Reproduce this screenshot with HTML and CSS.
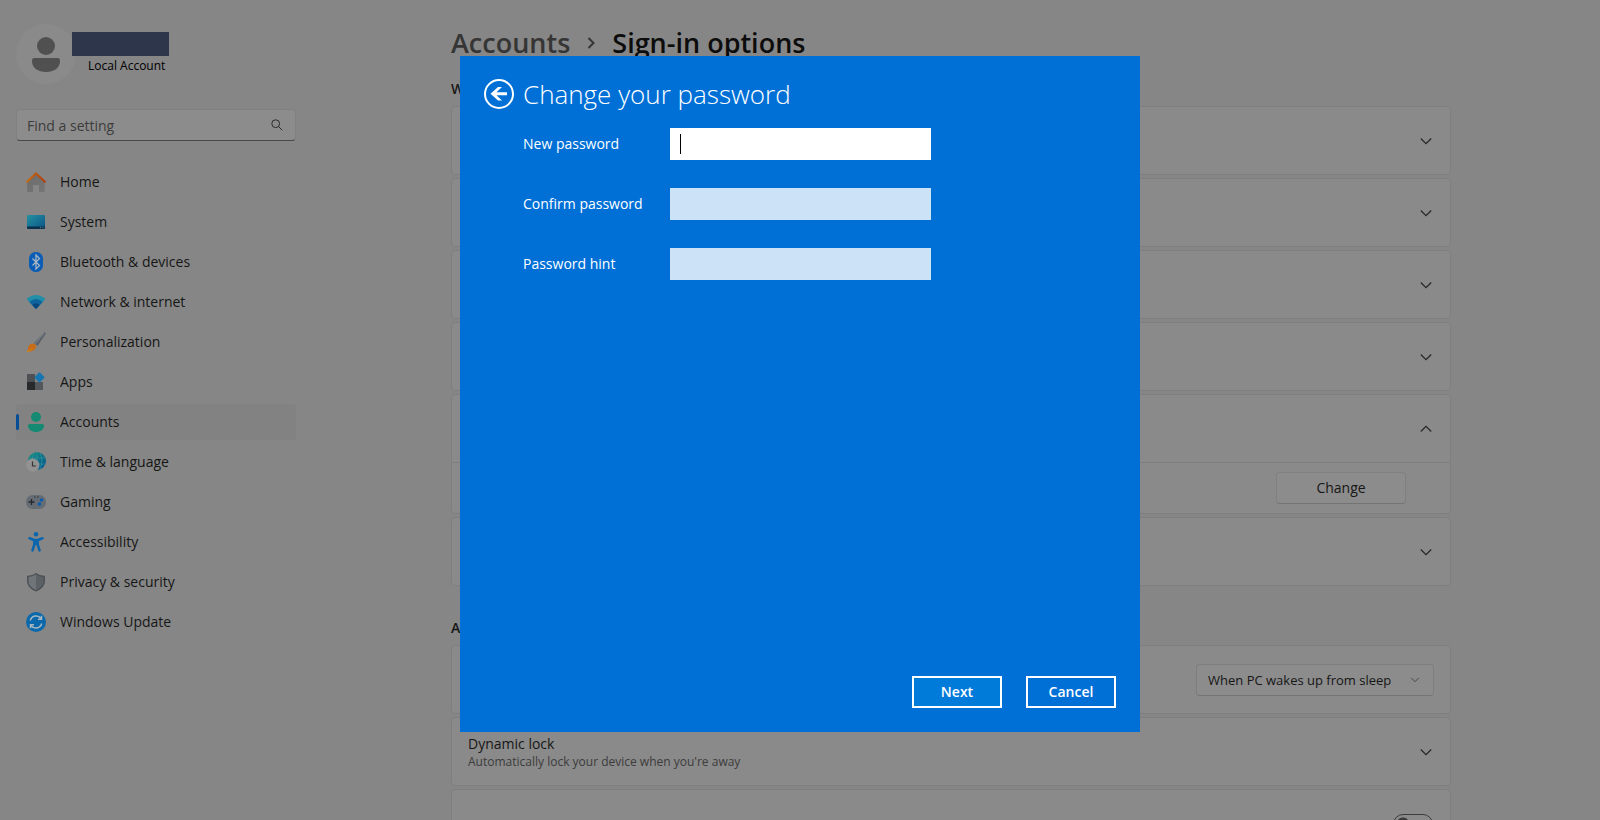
FILE: index.html
```html
<!DOCTYPE html>
<html lang="en">
<head>
<meta charset="utf-8">
<title>Settings</title>
<link rel="stylesheet" href="styles.css">
</head>
<body>
<div class="app">
  <aside class="sidebar">
    <div class="profile">
      <svg class="avatar" viewBox="0 0 60 60" aria-hidden="true"><circle cx="30" cy="30" r="30" fill="#8a8a8a"/><circle cx="30" cy="22" r="9" fill="#505050"/><path d="M18 34h24q2 0 2 3c0 7-6 11-14 11s-14-4-14-11q0-3 2-3z" fill="#505050"/></svg>
      <div class="who">
        <div class="name-mask"></div>
        <div class="account-type">Local Account</div>
      </div>
    </div>
    <form class="search">
      <input class="search-input" type="text" placeholder="Find a setting" aria-label="Find a setting">
      <svg class="search-icon" viewBox="0 0 12 12" aria-hidden="true"><circle cx="4.7" cy="4.7" r="3.9"/><path d="M7.6 7.6L11.3 11.3"/></svg>
    </form>
    <nav class="nav">
      <a class="nav-item" href="#"><svg class="ico" viewBox="0 0 20 20" aria-hidden="true"><defs><linearGradient id="roof" x1="0" x2="1"><stop offset="0" stop-color="#c46a10"/><stop offset="1" stop-color="#b0400e"/></linearGradient><linearGradient id="wall" x2="1" y2="1"><stop offset="0" stop-color="#6c6c6c"/><stop offset="1" stop-color="#767676"/></linearGradient></defs><path d="M1.200 10L10 2l8.800 8v9a1 1 0 0 1-1 1H13v-7H7v7H2.200a1 1 0 0 1-1-1z" fill="url(#wall)"/><path d="M1.200 9.800L10 1.500l8.800 8.300" fill="none" stroke="url(#roof)" stroke-width="2.200" stroke-linecap="round" stroke-linejoin="round"/></svg>Home</a>
      <a class="nav-item" href="#"><svg class="ico" viewBox="0 0 20 20" aria-hidden="true"><defs><linearGradient id="scr" x2="1" y2="1"><stop offset="0" stop-color="#2492a0"/><stop offset="1" stop-color="#0b5288"/></linearGradient></defs><rect x="1" y="3" width="18" height="14" rx="1" fill="url(#scr)"/><path d="M1 14.500h18V16q0 1-1 1H2q-1 0-1-1z" fill="#08304c"/><path d="M14 15.700h1M16.500 15.700h1" stroke="#6d8796"/></svg>System</a>
      <a class="nav-item" href="#"><svg class="ico" viewBox="0 0 20 20" aria-hidden="true"><rect x="3" y="0" width="14" height="20" rx="6.500" fill="#0a5cb4"/><path d="M6.500 6.500l7 7L10 17V3l3.500 3.500-7 7" fill="none" stroke="#a9b6c4" stroke-width="1.300"/></svg>Bluetooth &amp; devices</a>
      <a class="nav-item" href="#"><svg class="ico" viewBox="0 0 20 20" aria-hidden="true"><path d="M.5 7Q10-1 19.500 7L10 17z" fill="#228ea8"/><path d="M3.300 10Q10 4 16.700 10L10 17z" fill="#0e659e"/><path d="M6.200 13Q10 9.500 13.800 13L10 17z" fill="#08467c"/></svg>Network &amp; internet</a>
      <a class="nav-item" href="#"><svg class="ico" viewBox="0 0 20 20" aria-hidden="true"><path d="M19 .4q1 .5.500 1.600L11.500 14 8 11 17.500 1q.8-.8 1.500-.6z" fill="#5c6169"/><path d="M17.800 1.200L9.500 11.500" stroke="#858b93"/><path d="M4 12.500c2-2 5-.8 6 1 .6 4-3 6.500-9.500 6 1.500-1 1.500-1.800 1.700-4 .2-1.500.8-2.200 1.800-3z" fill="#c96c18"/><path d="M1 19.500q4-.5 5.500-3" stroke="#d78a22" fill="none"/></svg>Personalization</a>
      <a class="nav-item" href="#"><svg class="ico" viewBox="0 0 20 20" aria-hidden="true"><path d="M1 2h8v8H1z" fill="#4d5054"/><path d="M1 10h8v8H1z" fill="#28292b"/><path d="M9 10h8v8H9z" fill="#54575b"/><rect x="9.700" y="1.600" width="7.600" height="7.600" rx="1" fill="#1775b2" transform="rotate(45 13.500 5.400)"/></svg>Apps</a>
      <a class="nav-item active" href="#" aria-current="page"><svg class="ico" viewBox="0 0 20 20" aria-hidden="true"><circle cx="10" cy="5" r="5" fill="#148a72"/><path d="M3.500 12h13q1.500 0 1.500 1.500c0 4-3.500 6.500-8 6.500s-8-2.500-8-6.500Q2 12 3.500 12z" fill="#148a72"/></svg>Accounts</a>
      <a class="nav-item" href="#"><svg class="ico" viewBox="0 0 20 20" aria-hidden="true"><defs><linearGradient id="globe" x2="1" y2="1"><stop offset="0" stop-color="#17907f"/><stop offset="1" stop-color="#07558f"/></linearGradient></defs><circle cx="11" cy="9" r="9" fill="url(#globe)"/><path d="M3 6h16M3 12h16M11 0v18M8 1q-4 8 0 16M14 1q4 8 0 16" fill="none" stroke="#3b97a2" stroke-width=".6"/><circle cx="6.800" cy="13.200" r="6.600" fill="#929292"/><path d="M6.500 9.500V14H10" fill="none" stroke="#333" stroke-width="1.200"/></svg>Time &amp; language</a>
      <a class="nav-item" href="#"><svg class="ico" viewBox="0 0 20 20" aria-hidden="true"><rect x="0" y="3" width="20" height="14" rx="6.500" fill="#666c74"/><path d="M5.500 7v6M2.500 10h6" stroke="#26282b" stroke-width="1.300"/><path d="M8 5h1.500M11 5h1.500" stroke="#333"/><circle cx="15.500" cy="8" r="1.800" fill="#0b5cae"/><circle cx="13.500" cy="12" r="1.800" fill="#0b5cae"/></svg>Gaming</a>
      <a class="nav-item" href="#"><svg class="ico" viewBox="0 0 20 20" aria-hidden="true"><circle cx="10" cy="2.300" r="2.300" fill="#0c66ae"/><path d="M3.500 6.300L8 8h4l4.500-1.700M8.500 8v4L6.500 18.300M11.500 8v4l2 6.300" fill="none" stroke="#0c66ae" stroke-width="2.600" stroke-linecap="round" stroke-linejoin="round"/><path d="M7.500 7.500h5V13h-5z" fill="#0c66ae"/></svg>Accessibility</a>
      <a class="nav-item" href="#"><svg class="ico" viewBox="0 0 20 20" aria-hidden="true"><path d="M10 1q4 3 9 2.800V9q0 7-9 10.500Q1 16 1 9V3.800Q6 4 10 1z" fill="#4c5156"/><path d="M10 2.600q3.500 2.300 7.500 2.500V9q0 6-7.500 9z" fill="#5c6166"/><path d="M10 2.600Q6.500 4.900 2.500 5.100V9q0 6 7.500 9z" fill="#70757a"/></svg>Privacy &amp; security</a>
      <a class="nav-item" href="#"><svg class="ico" viewBox="0 0 20 20" aria-hidden="true"><circle cx="10" cy="10" r="10" fill="#0b68aa"/><path d="M4.300 8.500A6 6 0 0 1 15 6.500M15.500 3.800v3.500H12M15.700 11.500A6 6 0 0 1 5 13.500M4.500 16.200v-3.500H8" fill="none" stroke="#a4b6c3" stroke-width="1.500"/></svg>Windows Update</a>
    </nav>
  </aside>
  <main class="main">
    <div class="content">
      <h1 class="crumbs"><a class="crumb" href="#">Accounts</a><svg class="crumb-sep" viewBox="0 0 8 12" aria-hidden="true"><path d="M1.500 1l5 5-5 5"/></svg><span>Sign-in options</span></h1>
      <h2 class="section">Ways to sign in</h2>
      <div class="cards">
        <div class="card"><button class="row" aria-label="Expand"><svg class="chev" viewBox="0 0 12 12"><path d="M.8 3.500L6 8.700l5.200-5.200"/></svg></button></div>
        <div class="card"><button class="row" aria-label="Expand"><svg class="chev" viewBox="0 0 12 12"><path d="M.8 3.500L6 8.700l5.200-5.200"/></svg></button></div>
        <div class="card"><button class="row" aria-label="Expand"><svg class="chev" viewBox="0 0 12 12"><path d="M.8 3.500L6 8.700l5.200-5.200"/></svg></button></div>
        <div class="card"><button class="row" aria-label="Expand"><svg class="chev" viewBox="0 0 12 12"><path d="M.8 3.500L6 8.700l5.200-5.200"/></svg></button></div>
        <div class="card">
          <button class="row" aria-label="Collapse"><svg class="chev" viewBox="0 0 12 12"><path d="M.8 8.500L6 3.300l5.200 5.200"/></svg></button>
          <div class="subrow"><button class="btn">Change</button></div>
        </div>
        <div class="card"><button class="row" aria-label="Expand"><svg class="chev" viewBox="0 0 12 12"><path d="M.8 3.500L6 8.700l5.200-5.200"/></svg></button></div>
      </div>
      <h2 class="section section-next">Additional settings</h2>
      <div class="cards">
        <div class="card"><div class="row">
          <div class="select-wrap"><select class="select" aria-label="Require sign-in"><option>When PC wakes up from sleep</option></select><svg class="select-chev" viewBox="0 0 12 12" aria-hidden="true"><path d="M1.500 3.500L6 8l4.500-4.500"/></svg></div>
        </div></div>
        <div class="card"><button class="row"><span class="label"><span class="label-title">Dynamic lock</span><span class="label-sub">Automatically lock your device when you're away</span></span><svg class="chev" viewBox="0 0 12 12"><path d="M.8 3.500L6 8.700l5.200-5.200"/></svg></button></div>
        <div class="card"><div class="row"><label class="label-title label-single" for="restart">Automatically save my restartable apps and restart them when I sign back in</label><input class="toggle" id="restart" type="checkbox"></div></div>
      </div>
    </div>
  </main>
</div>
<div class="overlay">
  <form class="dialog" role="dialog" aria-labelledby="dlg-title">
    <header class="dlg-head">
      <button class="back" type="button" aria-label="Back"><svg viewBox="0 0 30 30" aria-hidden="true"><circle cx="15" cy="15" r="14" fill="none" stroke="#fff" stroke-width="2"/><path d="M6.500 14.800L14 8h4l-5.500 5.300H23v3H12.500L18 21.500h-4z" fill="#fff"/></svg></button>
      <h2 class="dlg-title" id="dlg-title">Change your password</h2>
    </header>
    <div class="fields">
      <label for="pw">New password</label><input class="field current" id="pw" type="password" autofocus>
      <label for="pw2">Confirm password</label><input class="field" id="pw2" type="password">
      <label for="hint">Password hint</label><input class="field" id="hint" type="text">
    </div>
    <footer class="dlg-foot"><button class="dlg-btn primary" type="button">Next</button><button class="dlg-btn" type="button">Cancel</button></footer>
  </form>
</div>
</body>
</html>
```
FILE: styles.css
```css
* { box-sizing: border-box; }
body {
  margin: 0;
  height: 100vh;
  overflow: hidden;
  background: #868686;
  color: #161616;
  font: 14px/20px "Open Sans", "Noto Sans", sans-serif;
}
button, input, select { font: inherit; color: inherit; margin: 0; }
h1, h2 { margin: 0; }
.app { display: flex; height: 100vh; overflow: hidden; }

/* Sidebar */
.sidebar { width: 302px; flex: none; padding: 24px 6px 0 16px; }
.profile { display: flex; height: 60px; }
.avatar { width: 60px; height: 60px; flex: none; }
.who { margin: 8px 0 0 -4px; }
.name-mask { width: 97px; height: 24px; background: #2d364b; }
.account-type { padding-left: 16px; font-size: 12px; color: #000; }
.search { display: flex; position: relative; margin-top: 25px; }
.search-input {
  width: 100%; height: 32px; padding: 0 36px 0 10px;
  background: #8c8c8c; border: 1px solid #808080; border-bottom-color: #484848;
  border-radius: 4px; outline: none;
}
.search-input::placeholder { color: #3c3c3c; opacity: 1; }
.search-icon { position: absolute; right: 13px; top: 10px; width: 12px; height: 12px; fill: none; stroke: #2c2c2c; }
.nav { display: flex; flex-direction: column; gap: 4px; margin-top: 23px; }
.nav-item {
  position: relative; display: flex; align-items: center; gap: 14px;
  height: 36px; padding: 0 10px; border-radius: 4px;
  color: inherit; text-decoration: none;
}
.ico { width: 20px; height: 20px; }
.active { background: #828282; }
.active::before { content: ""; position: absolute; left: 0; top: 10px; width: 3px; height: 16px; border-radius: 2px; background: #074c97; }

/* Page */
.main { flex: 1; min-width: 0; }
.content { max-width: 1000px; margin: 0 auto; padding-top: 25px; }
.crumbs { display: flex; align-items: center; font-size: 27px; line-height: 36px; font-weight: 600; color: #0c0c0c; }
.crumb { color: #353535; text-decoration: none; }
.crumb-sep { width: 8px; height: 12px; margin: 0 17px; fill: none; stroke: #353535; stroke-width: 2; }
.section { margin: 18px 0 7px; font-size: 14px; font-weight: 600; }
.section-next { margin-top: 32px; }
.cards { display: flex; flex-direction: column; gap: 3px; }
.card { background: #8a8a8a; border: 1px solid #7f7f7f; border-radius: 4px; }
.row {
  display: flex; align-items: center; justify-content: flex-end;
  width: 100%; height: 67px; padding: 0 17px 0 16px;
  background: none; border: 0; text-align: left;
}
button.row { padding-right: 18px; }
.chev { width: 12px; height: 12px; fill: none; stroke: #262626; stroke-width: 1.2; }
.subrow { display: flex; justify-content: flex-end; padding: 9px 44px 9px 16px; border-top: 1px solid #7f7f7f; }
.btn { width: 130px; height: 32px; background: #8c8c8c; border: 1px solid #808080; border-bottom-color: #747474; border-radius: 4px; }
.select-wrap { display: flex; position: relative; }
.row .select-wrap { margin-right: -1px; }
.select { appearance: none; width: 238px; height: 32px; padding: 0 11px; font-size: 13px; background: #8c8c8c; border: 1px solid #7e7e7e; border-bottom-color: #747474; border-radius: 4px; }
.select-chev { position: absolute; right: 14px; top: 11px; width: 10px; height: 10px; fill: none; stroke: #383838; }
.label { display: flex; flex-direction: column; margin-right: auto; }
.label-title { margin-right: auto; }
.label-single { padding-top: 2px; font-size: 13px; }
.label-sub { font-size: 12px; line-height: 16px; color: #3c3c3c; }
.toggle { appearance: none; width: 40px; height: 20px; border: 1px solid #3c3c3c; border-radius: 10px; background: radial-gradient(circle at 9px 9px, #3a3a3a 6px, transparent 7px); }

/* Password dialog */
.overlay { position: fixed; inset: 0; display: flex; justify-content: center; align-items: flex-start; padding: 56px 16px 88px; }
.dialog {
  display: flex; flex-direction: column; width: 680px; height: 100%;
  padding: 20px 24px 24px; background: #0070d7; color: #fff;
}
.dlg-head { display: flex; align-items: center; gap: 9px; }
.back { display: flex; width: 30px; height: 30px; padding: 0; border: 0; background: none; }
.dlg-title { font-weight: 300; font-size: 26px; line-height: 36px; }
.fields { display: grid; grid-template-columns: 147px 261px; row-gap: 28px; align-items: center; padding: 16px 0 0 39px; }
.field { height: 32px; padding: 0 10px; border: 0; border-radius: 0; background: #cce2f7; color: #000; outline: none; }
.current { background: #fff linear-gradient(#000, #000) 10px 50% / 1px 20px no-repeat; caret-color: transparent; }
.dlg-foot { display: flex; justify-content: flex-end; gap: 24px; margin-top: auto; }
.dlg-btn { width: 90px; height: 32px; padding: 0; border: 2px solid #fff; background: #0070d7; font-weight: 600; }
.primary { background: #007bd9; }
```
